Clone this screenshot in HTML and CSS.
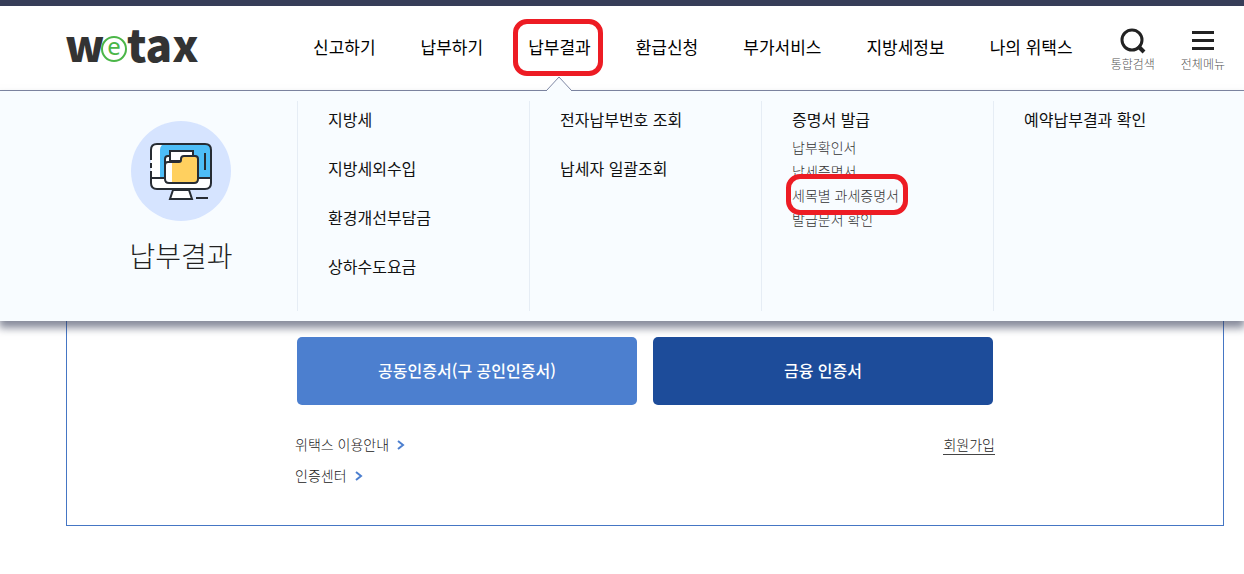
FILE: index.html
```html
<!DOCTYPE html>
<html lang="ko">
<head>
  <meta charset="UTF-8">
  <meta name="viewport" content="width=device-width, initial-scale=1.0">
  <title>위택스</title>
  <link rel="stylesheet" href="styles.css">
</head>
<body>
  <header class="header">
    <a href="#" class="logo" aria-label="wetax">
      <svg width="136" height="80" viewBox="0 0 136 80">
        <text class="logo-text" x="0" y="54">w</text>
        <circle cx="49" cy="41" r="12" fill="#fff" stroke="#4bb648" stroke-width="2"/>
        <text class="logo-e" x="49" y="47" text-anchor="middle">e</text>
        <text class="logo-text" x="62" y="54">tax</text>
      </svg>
    </a>

    <nav class="gnb">
      <ul>
        <li><a href="#">신고하기</a></li>
        <li><a href="#">납부하기</a></li>
        <li class="active">
          <a href="#">납부결과</a>
          <span class="mark mark-nav"></span>
          <svg class="arrow" width="26" height="15" viewBox="0 0 26 15">
            <path d="M1 14L13 1L25 14V15H1Z" fill="#f8fcff"/>
            <path d="M1 14L13 1L25 14" fill="none" stroke="#7f88a5"/>
          </svg>
        </li>
        <li><a href="#">환급신청</a></li>
        <li><a href="#">부가서비스</a></li>
        <li><a href="#">지방세정보</a></li>
        <li><a href="#">나의 위택스</a></li>
      </ul>
    </nav>

    <div class="tools">
      <button type="button">
        <svg width="26" height="26" viewBox="0 0 26 26" fill="none" stroke="#222" stroke-width="3">
          <circle cx="12" cy="12" r="10"/>
          <path d="M18 18L24 24" stroke-width="4"/>
        </svg>
        통합검색
      </button>
      <button type="button">
        <svg width="26" height="26" viewBox="0 0 26 26" fill="#222">
          <path d="M2 3h22v3H2zM2 11h22v3H2zM2 19h22v3H2z"/>
        </svg>
        전체메뉴
      </button>
    </div>

    <!-- 펼침 메뉴 -->
    <div class="submenu">
      <div class="submenu-title">
        <svg width="100" height="100" viewBox="0 0 100 100">
          <circle cx="50" cy="50" r="50" fill="#d6e4ff"/>
          <rect x="20" y="23" width="60" height="45" rx="6" fill="#fff"/>
          <path d="M29 57V29q0-6 6-6H74q6 0 6 6V57Z" fill="#4dbdf7"/>
          <g fill="none" stroke="#272c33" stroke-width="2">
            <path d="M20 39V29q0-6 6-6H74q6 0 6 6V62q0 6-6 6H26q-6 0-6-6V50M20 42V47M20 57H80"/>
            <path d="M74 32V49M65 77H77"/>
            <path d="M42 69L39 78H61L58 69Z" fill="#fff"/>
            <path d="M34 44V38q0-3 3-3h4v9Z" fill="#fff"/>
            <path d="M39 42V30H62V40H39Z" fill="#fff"/>
          </g>
          <path d="M34 44q0-3 3-3H48q2 0 2-2V38q0-3 3-3H64q3 0 3 3V58q0 4-4 4H38q-4 0-4-4Z" fill="#fff"/>
          <path d="M41 41H48q2 0 2-2V38q0-3 3-3H64q3 0 3 3V58q0 4-4 4H41Z" fill="#ffd05f"/>
          <path d="M34 44q0-3 3-3H48q2 0 2-2V38q0-3 3-3H64q3 0 3 3V58q0 4-4 4H38q-4 0-4-4Z" fill="none" stroke="#272c33" stroke-width="2"/>
        </svg>
        <h2>납부결과</h2>
      </div>
      <ul class="submenu-col">
        <li><a href="#">지방세</a></li>
        <li><a href="#">지방세외수입</a></li>
        <li><a href="#">환경개선부담금</a></li>
        <li><a href="#">상하수도요금</a></li>
      </ul>
      <ul class="submenu-col">
        <li><a href="#">전자납부번호 조회</a></li>
        <li><a href="#">납세자 일괄조회</a></li>
      </ul>
      <ul class="submenu-col">
        <li>
          <a href="#">증명서 발급</a>
          <ul class="depth3">
            <li><a href="#">납부확인서</a></li>
            <li><a href="#">납세증명서</a></li>
            <li class="picked"><a href="#">세목별 과세증명서</a><span class="mark mark-sub"></span></li>
            <li><a href="#">발급문서 확인</a></li>
          </ul>
        </li>
      </ul>
      <ul class="submenu-col">
        <li><a href="#">예약납부결과 확인</a></li>
      </ul>
    </div>
  </header>

  <main class="login-box">
    <div class="login-inner">
      <div class="cert-buttons">
        <button type="button" class="btn btn-joint">공동인증서(구 공인인증서)</button>
        <button type="button" class="btn btn-fin">금융 인증서</button>
      </div>
      <div class="login-links">
        <ul>
          <li><a href="#">위택스 이용안내
            <svg width="8" height="10" viewBox="0 0 8 10"><path d="M1 1L6 5L1 9" fill="none" stroke="#4c7fcf" stroke-width="2"/></svg></a></li>
          <li><a href="#">인증센터
            <svg width="8" height="10" viewBox="0 0 8 10"><path d="M1 1L6 5L1 9" fill="none" stroke="#4c7fcf" stroke-width="2"/></svg></a></li>
        </ul>
        <a href="#" class="join">회원가입</a>
      </div>
    </div>
  </main>
</body>
</html>
```
FILE: styles.css
```css
* {
  box-sizing: border-box;
}

body {
  margin: 0;
  background: #fff;
  color: #222;
  font-family: "Noto Sans CJK KR", sans-serif;
  font-size: 14px;
}

ul {
  margin: 0;
  padding: 0;
  list-style: none;
}

a {
  color: inherit;
  text-decoration: none;
}

button {
  border: 0;
  padding: 0;
  font-family: inherit;
  cursor: pointer;
}

/* Header */
.header {
  position: relative;
  display: flex;
  align-items: center;
  height: 91px;
  padding: 0 19px 0 65px;
  border-top: 6px solid #373d58;
  border-bottom: 1px solid #7f88a5;
  background: #fff;
}

.logo svg {
  display: block;
  overflow: visible;
}

.logo-text {
  font-size: 44px;
  font-weight: 900;
  fill: #333;
}

.logo-e {
  font-family: "Noto Sans", sans-serif;
  font-size: 24px;
  fill: #4bb648;
}

.gnb {
  align-self: stretch;
  margin-left: 112px;
}

.gnb ul {
  display: flex;
  gap: 45px;
  height: 100%;
}

.gnb li {
  position: relative;
  display: flex;
  align-items: center;
  padding-bottom: 4px;
  color: #000;
  font-size: 17px;
  white-space: nowrap;
}

.arrow {
  position: absolute;
  bottom: -1px;
  left: 50%;
  margin-left: -13px;
  z-index: 3;
}

/* Red highlight outlines */
.mark {
  position: absolute;
  border: 5px solid #ed1c24;
  border-radius: 14px;
  pointer-events: none;
}

.mark-nav {
  top: 13px;
  left: -15px;
  right: -12px;
  height: 57px;
}

.mark-sub {
  top: -9px;
  left: -6px;
  right: -9px;
  height: 41px;
}

.tools {
  display: flex;
  gap: 26px;
  margin-left: auto;
  padding-top: 5px;
}

.tools button {
  display: flex;
  flex-direction: column;
  align-items: center;
  background: none;
  color: #555;
  font-size: 12px;
  font-weight: 300;
  line-height: 20px;
}

/* Submenu */
.submenu {
  position: absolute;
  top: 100%;
  left: 0;
  right: 0;
  z-index: 2;
  display: grid;
  grid-template-columns: repeat(5, 1fr);
  margin-top: 1px;
  padding: 10px 19px 10px 65px;
  background: #f8fcff;
  box-shadow: 0 6px 8px 1px rgba(55, 61, 88, 0.6);
}

.submenu-title {
  padding-top: 20px;
  text-align: center;
}

.submenu-title svg {
  display: block;
  margin: 0 auto;
}

.submenu-title h2 {
  margin: 14px 0 0;
  font-size: 28px;
  font-weight: 300;
  line-height: 40px;
}

.submenu-col {
  display: flex;
  flex-direction: column;
  gap: 25px;
  min-height: 210px;
  padding: 6px 0 0 30px;
  border-left: 1px solid #e6edf5;
  color: #111;
  font-size: 16px;
  line-height: 24px;
}

.depth3 {
  margin-top: 4px;
  color: #333;
  font-size: 14px;
  font-weight: 300;
}

.picked {
  position: relative;
  width: fit-content;
}

/* Login area */
.login-box {
  margin: 0 20px 0 66px;
  padding: 246px 20px 34px;
  border: 1px solid #4576c4;
  border-top: 0;
}

.login-inner {
  max-width: 700px;
  margin: 0 auto;
}

.cert-buttons {
  display: flex;
  gap: 16px;
  padding: 0 2px;
}

.btn {
  flex: 1;
  height: 68px;
  padding-bottom: 2px;
  border-radius: 5px;
  color: #fff;
  font-size: 16px;
  font-weight: 500;
}

.btn-joint {
  background: #4c7fcf;
}

.btn-fin {
  background: #1d4c9a;
}

.login-links {
  display: flex;
  justify-content: space-between;
  align-items: flex-start;
  margin-top: 24px;
  color: #222;
  font-weight: 300;
  line-height: 31px;
}

.login-links li a {
  display: flex;
  align-items: center;
  gap: 8px;
}

.join {
  margin-top: 5px;
  border-bottom: 1px solid #444;
  line-height: 20px;
}
```
